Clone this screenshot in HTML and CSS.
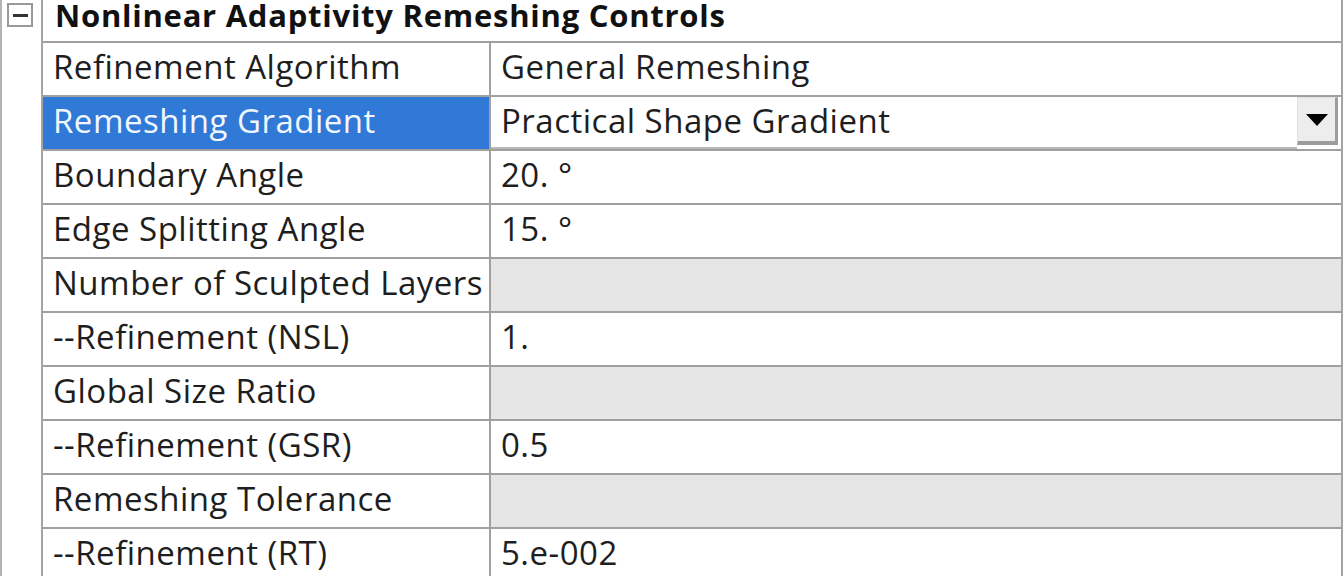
FILE: index.html
```html
<!DOCTYPE html>
<html>
<head>
<meta charset="utf-8">
<link rel="stylesheet" href="styles.css">
</head>
<body>
<div class="page">
  <div class="gutter">
    <div class="toggle"><span class="minus"></span></div>
  </div>
  <div class="main">
    <div class="header">Nonlinear Adaptivity Remeshing Controls</div>
    <div class="grid">
      <div class="cell label">Refinement Algorithm</div>
      <div class="cell value">General Remeshing</div>

      <div class="cell label selected">Remeshing Gradient</div>
      <div class="cell value combo">
        <div class="field">Practical Shape Gradient</div>
        <div class="button"><span class="arrow"></span></div>
      </div>

      <div class="cell label">Boundary Angle</div>
      <div class="cell value">20. °</div>

      <div class="cell label">Edge Splitting Angle</div>
      <div class="cell value">15. °</div>

      <div class="cell label">Number of Sculpted Layers</div>
      <div class="cell value disabled"></div>

      <div class="cell label">--Refinement (NSL)</div>
      <div class="cell value">1.</div>

      <div class="cell label">Global Size Ratio</div>
      <div class="cell value disabled"></div>

      <div class="cell label">--Refinement (GSR)</div>
      <div class="cell value">0.5</div>

      <div class="cell label">Remeshing Tolerance</div>
      <div class="cell value disabled"></div>

      <div class="cell label">--Refinement (RT)</div>
      <div class="cell value">5.e-002</div>
    </div>
  </div>
</div>
</body>
</html>
```

FILE: styles.css
```css
html, body {
  margin: 0;
  padding: 0;
  background: #ffffff;
}
body {
  width: 1344px;
  height: 576px;
  overflow: hidden;
  font-family: "Open Sans", "Noto Sans", sans-serif;
  color: #1e1e1e;
}
.page {
  display: flex;
  height: 576px;
  overflow: hidden;
}
.gutter {
  width: 39px;
  border-left: 2px solid #b4b4b4;
  background: #ffffff;
  flex: none;
}
.toggle {
  margin: 3px 0 0 5px;
  width: 22px;
  height: 20px;
  border: 2px solid #9a9a9a;
  display: flex;
  align-items: center;
  justify-content: center;
}
.minus {
  width: 15px;
  height: 3px;
  background: #333333;
}
.main {
  flex: 1;
  border-left: 2px solid #a4a4a4;
  border-right: 2px solid #a4a4a4;
  margin-right: 1px;
}
.header {
  height: 41px;
  border-bottom: 2px solid #a0a0a0;
  font-weight: 700;
  font-size: 31px;
  letter-spacing: 0.75px;
  line-height: 30px;
  padding-left: 12px;
  color: #111111;
  white-space: nowrap;
}
.grid {
  display: grid;
  grid-template-columns: 448px 1fr;
  grid-auto-rows: 54px;
}
.cell {
  border-bottom: 2px solid #a0a0a0;
  font-size: 33px;
  letter-spacing: 0.5px;
  line-height: 48px;
  padding-left: 10px;
  white-space: nowrap;
  overflow: hidden;
}
.label {
  border-right: 2px solid #a0a0a0;
}
.selected {
  background: #3079d6;
  color: #f2f7ff;
}
.disabled {
  background: #e6e6e6;
}
.combo {
  display: flex;
  padding-left: 0;
}
.field {
  flex: 1;
  padding-left: 10px;
  height: 50px;
  border-bottom: 2px solid #b8b8b8;
}
.button {
  width: 37px;
  height: 43px;
  background: #ededed;
  border-top: 1px solid #e0e0e0;
  border-left: 1px solid #e0e0e0;
  border-right: 3px solid #9c9c9c;
  border-bottom: 4px solid #9c9c9c;
  margin-right: 3px;
  display: flex;
  align-items: center;
  justify-content: center;
}
.arrow {
  width: 0;
  height: 0;
  border-left: 11px solid transparent;
  border-right: 11px solid transparent;
  border-top: 12px solid #000000;
}
```
